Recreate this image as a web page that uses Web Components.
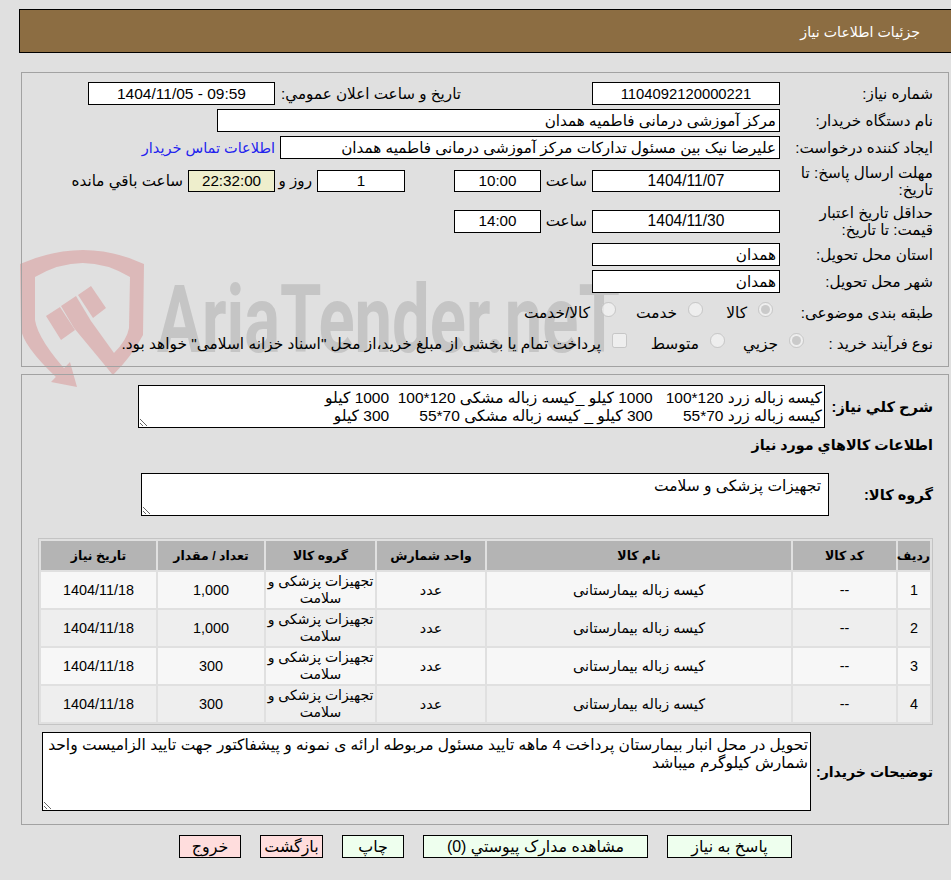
<!DOCTYPE html>
<html lang="fa">
<head>
<meta charset="utf-8">
<title>جزئیات اطلاعات نیاز</title>
<style>
  html, body { margin: 0; height: 100%; overflow: hidden; }
  body {
    background: #e0e0e0;
    color: #000;
    font: 15.2px/18px "Liberation Sans", "DejaVu Sans", sans-serif;
    position: relative;
  }
</style>
</head>
<body>
<water-mark></water-mark>
<page-header>جزئیات اطلاعات نیاز</page-header>

<info-panel style="margin-top:19px;height:284px;padding-top:9px">
  <info-row label="شماره نیاز:">
    <text-field w="188" center style="font-size:14.8px">1104092120000221</text-field>
    <row-text w="181" style="margin-right:131px">تاریخ و ساعت اعلان عمومي:</row-text>
    <text-field w="187" center style="margin-right:5px;font-size:15.5px"><span dir="ltr">1404/11/05 - 09:59</span></text-field>
  </info-row>
  <info-row label="نام دستگاه خریدار:">
    <text-field w="563">مرکز آموزشی درمانی فاطمیه همدان</text-field>
  </info-row>
  <info-row label="ایجاد کننده درخواست:">
    <text-field w="500">علیرضا نیک بین مسئول تدارکات مرکز آموزشی درمانی فاطمیه همدان</text-field>
    <row-text w="133" link style="margin-right:5px;font-size:14.5px">اطلاعات تماس خریدار</row-text>
  </info-row>
  <info-row label="مهلت ارسال پاسخ: تا تاریخ:" tall>
    <text-field w="188" h="22" center style="font-size:15.6px">1404/11/07</text-field>
    <row-text w="41" style="margin-right:5px">ساعت</row-text>
    <text-field w="87" h="22" center style="margin-right:5px">10:00</text-field>
    <text-field w="88" h="22" center style="margin-right:49px">1</text-field>
    <row-text w="28" style="margin-right:5px">روز و</row-text>
    <text-field w="87" h="22" center timer style="margin-right:9px">22:32:00</text-field>
    <row-text w="113" style="margin-right:5px">ساعت باقي مانده</row-text>
  </info-row>
  <info-row label="حداقل تاریخ اعتبار&lt;br&gt;قیمت: تا تاریخ:" tall>
    <text-field w="188" center style="font-size:15.6px">1404/11/30</text-field>
    <row-text w="41" style="margin-right:5px">ساعت</row-text>
    <text-field w="87" center style="margin-right:5px">14:00</text-field>
  </info-row>
  <info-row label="استان محل تحویل:">
    <text-field w="188">همدان</text-field>
  </info-row>
  <info-row label="شهر محل تحویل:">
    <text-field w="188">همدان</text-field>
  </info-row>
  <info-row label="طبقه بندی موضوعی:" style="height:30px;margin-top:4px">
    <check-option w="70" type="radio" checked style="margin-right:7px">کالا</check-option>
    <check-option w="87" type="radio">خدمت</check-option>
    <check-option w="100" type="radio">کالا/خدمت</check-option>
  </info-row>
  <info-row label="نوع فرآیند خرید :" style="height:24px;margin-top:4px">
    <check-option w="79" type="radio" checked style="margin-right:-24px">جزیي</check-option>
    <check-option w="98" type="radio">متوسط</check-option>
    <check-option w="505" type="checkbox">پرداخت تمام یا بخشی از مبلغ خرید،از محل "اسناد خزانه اسلامی" خواهد بود.</check-option>
  </info-row>
</info-panel>

<info-panel style="margin-top:7px;height:439px;padding-top:10px">
  <memo-row label="شرح کلي نياز:" col="108" box="687" h="43" pad="2" text="کیسه زباله زرد 120*100   1000 کیلو _کیسه زباله مشکی 120*100  1000 کیلو&#10;کیسه زباله زرد 70*55       300 کیلو _ کیسه زباله مشکی 70*55       300 کیلو"></memo-row>
  <bold-title>اطلاعات کالاهاي مورد نياز</bold-title>
  <memo-row label="گروه کالا:" col="104" box="688" h="43" pad="7" text="تجهیزات پزشکی و سلامت"></memo-row>
  <items-table></items-table>
  <memo-row label="توضیحات خریدار:" col="122" box="769" h="79" pad="2" size="14.1" text="تحویل در محل انبار بیمارستان پرداخت 4 ماهه تایید مسئول مربوطه ارائه ی نمونه و پیشفاکتور جهت تایید الزامیست واحد شمارش کیلوگرم میباشد" style="margin-top:7px"></memo-row>
</info-panel>

<action-bar>
  <action-button w="125">پاسخ به نیاز</action-button>
  <action-button w="225">مشاهده مدارک پیوستي (0)</action-button>
  <action-button w="62">چاپ</action-button>
  <action-button w="63" danger>بازگشت</action-button>
  <action-button w="62" danger>خروج</action-button>
</action-bar>

<script>
class WaterMark extends HTMLElement {
  constructor () {
    super()
    this.attachShadow({ mode: 'open' })
  }

  connectedCallback () {
    this.shadowRoot.innerHTML = `
      <style>
        :host{ position: absolute; left: 0; top: 0; width: 100%; height: 420px; pointer-events: none; }
        svg{ position: absolute; left: 0; top: 0; }
        .brand{
          color: #c5c5c5;
          font: 700 94px/94px Roboto, sans-serif;
          left: 157px;
          position: absolute;
          top: 273px;
          transform: scaleX(0.712);
          transform-origin: 0 0;
          white-space: nowrap;
        }
      </style>
      <svg width="160" height="400" viewBox="0 0 160 400">
        <g fill="#dcb9b9">
          <path d="M20 264 Q84 236 144 264 L143 335 Q132 356 113 375 L100 358 L114 353 Q127 340 129 328 L130 277 Q83 249 35 277 L35 320 Q38 340 70 375 L57 378 Q22 345 21 328 Z"/>
          <polygon points="70,362 77,387 51,382"/>
          <polygon points="46,316 60,307 75,330 61,340"/>
          <polygon points="61,306 76,296 91,321 114,353 113,375 74,328"/>
          <polygon points="78,295 91,286 106,308 93,318"/>
        </g>
      </svg>
      <div class="brand">AriaTender.neT</div>
    `
  }
}

class PageHeader extends HTMLElement {
  constructor () {
    super()
    this.attachShadow({ mode: 'open' })
  }

  connectedCallback () {
    this.shadowRoot.innerHTML = `
      <style>
        :host{
          background: #8c6d42;
          border: 1px solid #000;
          box-sizing: border-box;
          color: #fff;
          direction: rtl;
          display: block;
          font-size: 14.2px;
          height: 44px;
          line-height: 44px;
          margin: 9px -20px 0 19px;
          padding-right: 50px;
          position: relative;
        }
      </style>
      <slot></slot>
    `
  }
}

class InfoPanel extends HTMLElement {
  constructor () {
    super()
    this.attachShadow({ mode: 'open' })
  }

  connectedCallback () {
    this.shadowRoot.innerHTML = `
      <style>
        :host{
          border: 1px solid #a2a2a2;
          box-sizing: content-box;
          direction: rtl;
          display: block;
          margin-left: 21px;
          padding: 0 15px;
          position: relative;
          width: 896px;
        }
      </style>
      <slot></slot>
    `
  }
}

class InfoRow extends HTMLElement {
  constructor () {
    super()
    this.attachShadow({ mode: 'open' })
  }

  connectedCallback () {
    const tall = this.hasAttribute('tall')
    this.shadowRoot.innerHTML = `
      <style>
        :host{
          align-items: center;
          display: flex;
          height: ${tall ? 36 : 23}px;
          margin-bottom: 4px;
        }
        .label{ flex: none; line-height: 17px; width: 153px; }
        .body{ align-items: center; display: flex; flex: 1; }
      </style>
      <div class="label">${this.getAttribute('label')}</div>
      <div class="body"><slot></slot></div>
    `
  }
}

class TextField extends HTMLElement {
  constructor () {
    super()
    this.attachShadow({ mode: 'open' })
  }

  connectedCallback () {
    const w = this.getAttribute('w')
    const h = this.getAttribute('h') || 23
    this.shadowRoot.innerHTML = `
      <style>
        :host{
          align-items: center;
          background: ${this.hasAttribute('timer') ? '#eeeecc' : '#fff'};
          border: 1px solid #000;
          box-sizing: border-box;
          display: flex;
          flex: none;
          height: ${h}px;
          justify-content: ${this.hasAttribute('center') ? 'center' : 'flex-start'};
          padding: 0 3px;
          white-space: nowrap;
          width: ${w}px;
        }
      </style>
      <slot></slot>
    `
  }
}

class RowText extends HTMLElement {
  constructor () {
    super()
    this.attachShadow({ mode: 'open' })
  }

  connectedCallback () {
    this.shadowRoot.innerHTML = `
      <style>
        :host{
          color: ${this.hasAttribute('link') ? '#2222ee' : 'inherit'};
          display: block;
          flex: none;
          white-space: nowrap;
          width: ${this.getAttribute('w')}px;
        }
      </style>
      <slot></slot>
    `
  }
}

class CheckOption extends HTMLElement {
  constructor () {
    super()
    this.attachShadow({ mode: 'open' })
  }

  connectedCallback () {
    const checked = this.hasAttribute('checked') ? 'checked' : ''
    this.shadowRoot.innerHTML = `
      <style>
        :host{
          align-items: center;
          display: flex;
          flex: none;
          font-size: 15.4px;
          gap: 11px;
          white-space: nowrap;
          width: ${this.getAttribute('w')}px;
        }
        input{ flex: none; height: 15px; margin: -6px 0 0; width: 15px; }
        span{ padding-top: 2px; }
      </style>
      <input type="${this.getAttribute('type')}" disabled ${checked}>
      <span><slot></slot></span>
    `
  }
}

class MemoRow extends HTMLElement {
  constructor () {
    super()
    this.attachShadow({ mode: 'open' })
  }

  connectedCallback () {
    const pad = this.getAttribute('pad')
    const size = this.getAttribute('size') || 14.6
    this.shadowRoot.innerHTML = `
      <style>
        :host{ align-items: center; display: flex; }
        .label{ flex: none; font-weight: 700; font-size: ${size}px; white-space: nowrap; width: ${this.getAttribute('col')}px; }
        textarea{
          background: #fff;
          border: 1px solid #000;
          border-radius: 0;
          box-sizing: border-box;
          color: #000;
          flex: none;
          font: 15.5px/18px "Liberation Sans", "DejaVu Sans", sans-serif;
          height: ${this.getAttribute('h')}px;
          margin: 0;
          outline: none;
          padding: 3px ${pad}px 0 3px;
          width: ${this.getAttribute('box')}px;
        }
      </style>
      <div class="label">${this.getAttribute('label')}</div>
      <textarea readonly dir="rtl"></textarea>
    `
    this.shadowRoot.querySelector('textarea').textContent = this.getAttribute('text')
  }
}

class BoldTitle extends HTMLElement {
  constructor () {
    super()
    this.attachShadow({ mode: 'open' })
  }

  connectedCallback () {
    this.shadowRoot.innerHTML = `
      <style>
        :host{ display: block; font-size: 14.3px; font-weight: 700; margin: 8px 0 19px; }
      </style>
      <slot></slot>
    `
  }
}

class ItemsTable extends HTMLElement {
  constructor () {
    super()
    this.attachShadow({ mode: 'open' })
  }

  connectedCallback () {
    const rows = [
      ['1', '1,000'],
      ['2', '1,000'],
      ['3', '300'],
      ['4', '300']
    ]

    this.shadowRoot.innerHTML = `
      <style>
        :host{ display: block; margin-top: 22px; }
        table{
          border: 1px solid #c4c4c4;
          border-spacing: 2px;
          box-sizing: border-box;
          direction: rtl;
          font-size: 14.4px;
          table-layout: fixed;
          width: 895px;
        }
        th{ background: #b4b4b4; font-size: 12.5px; height: 29px; padding: 0; }
        td{ height: 36px; line-height: 17px; padding: 0; text-align: center; }
        td.group{ font-size: 14px; white-space: nowrap; }
        tbody tr:nth-child(odd) td{ background: #f7f7f7; }
        tbody tr:nth-child(even) td{ background: #eeeeee; }
      </style>
      <table>
        <colgroup>
          <col style="width:32px"><col style="width:103px"><col style="width:304px">
          <col style="width:108px"><col style="width:109px"><col style="width:106px"><col>
        </colgroup>
        <thead>
          <tr>
            <th>ردیف</th><th>کد کالا</th><th>نام کالا</th><th>واحد شمارش</th>
            <th>گروه کالا</th><th>تعداد / مقدار</th><th>تاریخ نیاز</th>
          </tr>
        </thead>
        <tbody>
          ${rows.map(([index, amount]) => `
            <tr>
              <td>${index}</td><td>--</td><td>کیسه زباله بیمارستانی</td><td>عدد</td>
              <td class="group">تجهیزات پزشکی و<br>سلامت</td><td>${amount}</td><td>1404/11/18</td>
            </tr>
          `).join('')}
        </tbody>
      </table>
    `
  }
}

class ActionBar extends HTMLElement {
  constructor () {
    super()
    this.attachShadow({ mode: 'open' })
  }

  connectedCallback () {
    this.shadowRoot.innerHTML = `
      <style>
        :host{
          direction: rtl;
          display: flex;
          gap: 19px;
          margin-top: 10px;
          padding-right: 159px;
          position: relative;
        }
      </style>
      <slot></slot>
    `
  }
}

class ActionButton extends HTMLElement {
  constructor () {
    super()
    this.attachShadow({ mode: 'open' })
  }

  connectedCallback () {
    this.shadowRoot.innerHTML = `
      <style>
        :host{ display: block; flex: none; width: ${this.getAttribute('w')}px; }
        button{
          background: ${this.hasAttribute('danger') ? '#ffdddd' : '#eeffee'};
          border: 1px solid #000;
          box-sizing: border-box;
          color: #000;
          font: 15.9px/18px "Liberation Sans", "DejaVu Sans", sans-serif;
          height: 23px;
          padding: 0;
          width: 100%;
        }
      </style>
      <button type="button"><slot></slot></button>
    `
  }
}

customElements.define('water-mark', WaterMark)
customElements.define('page-header', PageHeader)
customElements.define('info-panel', InfoPanel)
customElements.define('info-row', InfoRow)
customElements.define('text-field', TextField)
customElements.define('row-text', RowText)
customElements.define('check-option', CheckOption)
customElements.define('memo-row', MemoRow)
customElements.define('bold-title', BoldTitle)
customElements.define('items-table', ItemsTable)
customElements.define('action-bar', ActionBar)
customElements.define('action-button', ActionButton)
</script>
</body>
</html>
